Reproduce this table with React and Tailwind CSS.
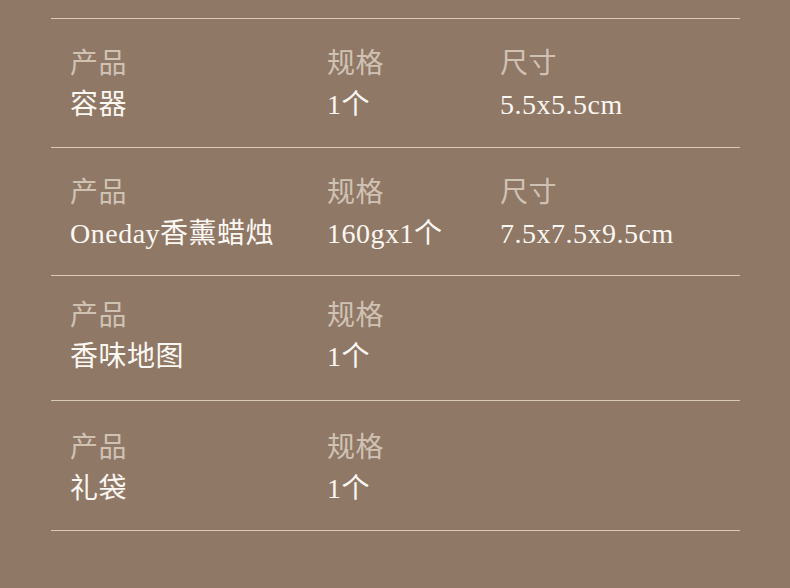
import React from "react";

const rows = [
  { name: "容器", spec: "1个", size: "5.5x5.5cm", pad: "pt-[24px] h-[129px]" },
  { name: "Oneday香薰蜡烛", spec: "160gx1个", size: "7.5x7.5x9.5cm", pad: "pt-[24px] h-[128px]" },
  { name: "香味地图", spec: "1个", size: null, pad: "pt-[19px] h-[125px]" },
  { name: "礼袋", spec: "1个", size: null, pad: "pt-[26px] h-[130px]" },
];

export default function App() {
  return (
    <div
      className="w-[790px] h-[588px] bg-[#8f7866] pt-[18px] pl-[51px] pr-[50px]"
      style={{ fontFamily: '"Liberation Serif", "Noto Sans CJK SC", serif' }}
    >
      <div className="border-b border-[#d9c9b7]">
        {rows.map((r, i) => (
          <div
            key={i}
            className={`border-t border-[#d9c9b7] pl-[19px] grid grid-cols-[257px_173px_1fr] text-[28px] leading-[41px] tracking-[0.5px] ${r.pad}`}
          >
            {/* 产品 */}
            <div>
              <div className="text-[#d0c2b3]">产品</div>
              <div className="text-[#fbf7f2]">{r.name}</div>
            </div>

            {/* 规格 */}
            <div>
              <div className="text-[#d0c2b3]">规格</div>
              <div className="text-[#fbf7f2]">{r.spec}</div>
            </div>

            {/* 尺寸 */}
            {r.size && (
              <div>
                <div className="text-[#d0c2b3]">尺寸</div>
                <div className="text-[#fbf7f2]">{r.size}</div>
              </div>
            )}
          </div>
        ))}
      </div>
    </div>
  );
}
